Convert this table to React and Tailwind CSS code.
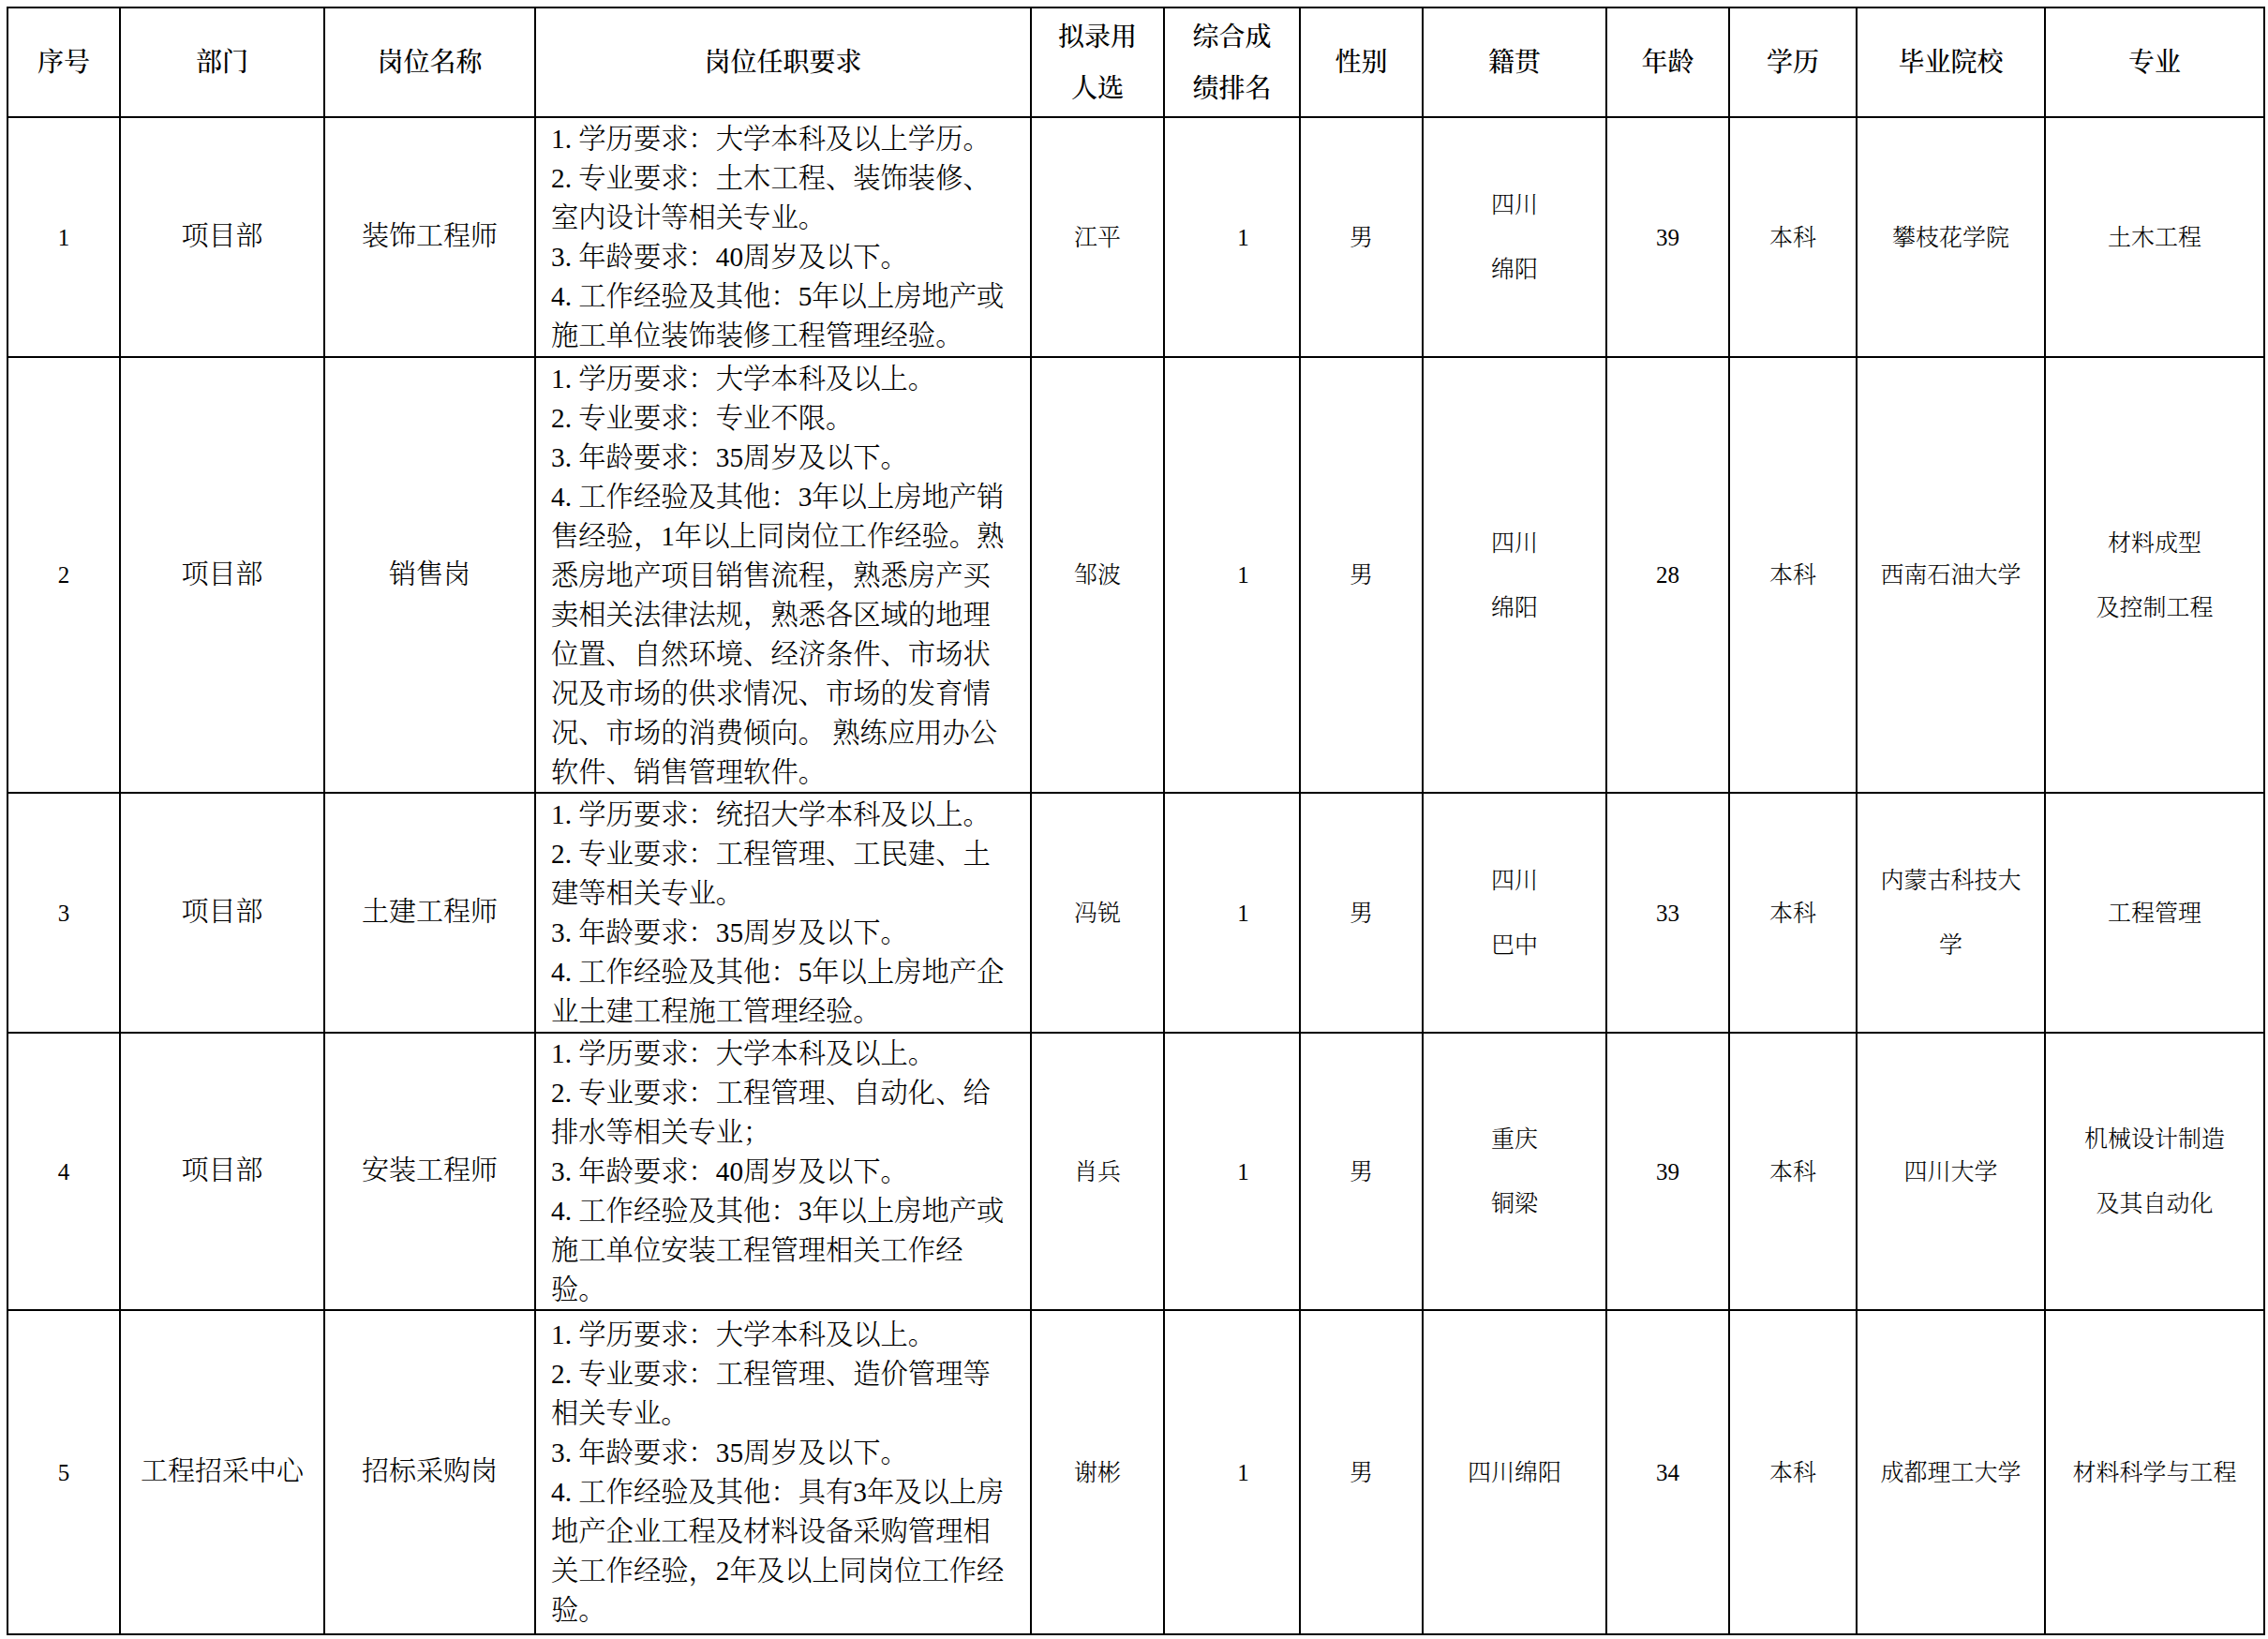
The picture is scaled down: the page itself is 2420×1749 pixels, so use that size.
import React from "react";

const FONT = {
  fontFamily:
    '"Liberation Serif", "Noto Serif CJK SC", "Noto Sans CJK SC", serif',
};

const rows = [
  {
    no: "1",
    dept: "项目部",
    pos: "装饰工程师",
    req: [
      "1.学历要求：大学本科及以上学历。",
      "2.专业要求：土木工程、装饰装修、",
      "室内设计等相关专业。",
      "3.年龄要求：40周岁及以下。",
      "4.工作经验及其他：5年以上房地产或",
      "施工单位装饰装修工程管理经验。",
    ],
    name: "江平",
    rank: "1",
    sex: "男",
    origin: ["四川", "绵阳"],
    age: "39",
    edu: "本科",
    school: ["攀枝花学院"],
    major: ["土木工程"],
  },
  {
    no: "2",
    dept: "项目部",
    pos: "销售岗",
    req: [
      "1.学历要求：大学本科及以上。",
      "2.专业要求：专业不限。",
      "3.年龄要求：35周岁及以下。",
      "4.工作经验及其他：3年以上房地产销",
      "售经验，1年以上同岗位工作经验。熟",
      "悉房地产项目销售流程，熟悉房产买",
      "卖相关法律法规，熟悉各区域的地理",
      "位置、自然环境、经济条件、市场状",
      "况及市场的供求情况、市场的发育情",
      "况、市场的消费倾向。 熟练应用办公",
      "软件、销售管理软件。",
    ],
    name: "邹波",
    rank: "1",
    sex: "男",
    origin: ["四川", "绵阳"],
    age: "28",
    edu: "本科",
    school: ["西南石油大学"],
    major: ["材料成型", "及控制工程"],
  },
  {
    no: "3",
    dept: "项目部",
    pos: "土建工程师",
    req: [
      "1.学历要求：统招大学本科及以上。",
      "2.专业要求：工程管理、工民建、土",
      "建等相关专业。",
      "3.年龄要求：35周岁及以下。",
      "4.工作经验及其他：5年以上房地产企",
      "业土建工程施工管理经验。",
    ],
    name: "冯锐",
    rank: "1",
    sex: "男",
    origin: ["四川", "巴中"],
    age: "33",
    edu: "本科",
    school: ["内蒙古科技大", "学"],
    major: ["工程管理"],
  },
  {
    no: "4",
    dept: "项目部",
    pos: "安装工程师",
    req: [
      "1.学历要求：大学本科及以上。",
      "2.专业要求：工程管理、自动化、给",
      "排水等相关专业；",
      "3.年龄要求：40周岁及以下。",
      "4.工作经验及其他：3年以上房地产或",
      "施工单位安装工程管理相关工作经",
      "验。",
    ],
    name: "肖兵",
    rank: "1",
    sex: "男",
    origin: ["重庆", "铜梁"],
    age: "39",
    edu: "本科",
    school: ["四川大学"],
    major: ["机械设计制造", "及其自动化"],
  },
  {
    no: "5",
    dept: "工程招采中心",
    pos: "招标采购岗",
    req: [
      "1.学历要求：大学本科及以上。",
      "2.专业要求：工程管理、造价管理等",
      "相关专业。",
      "3.年龄要求：35周岁及以下。",
      "4.工作经验及其他：具有3年及以上房",
      "地产企业工程及材料设备采购管理相",
      "关工作经验，2年及以上同岗位工作经",
      "验。",
    ],
    name: "谢彬",
    rank: "1",
    sex: "男",
    origin: ["四川绵阳"],
    age: "34",
    edu: "本科",
    school: ["成都理工大学"],
    major: ["材料科学与工程"],
  },
];

function Head({ children }) {
  return (
    <div className="bg-white flex flex-col items-center justify-center text-[28px] font-medium text-black leading-[55px] text-center">
      {children}
    </div>
  );
}

function Big({ children }) {
  return (
    <div className="bg-white flex items-center justify-center text-[29px] font-light text-black text-center whitespace-nowrap">
      {children}
    </div>
  );
}

function Small({ lines, shift }) {
  return (
    <div
      className={
        "bg-white flex flex-col items-center justify-center text-[25px] font-light text-black text-center leading-[69px] whitespace-nowrap" +
        (shift ? " pl-[24px]" : "")
      }
    >
      {lines.map((l, i) => (
        <div key={i}>{l}</div>
      ))}
    </div>
  );
}

function ReqLine({ text }) {
  const m = text.match(/^(\d\.)(.*)$/);
  if (m) {
    return (
      <div>
        <span className="inline-block w-[1em]">{m[1]}</span>
        {m[2]}
      </div>
    );
  }
  return <div>{text}</div>;
}

function Req({ lines }) {
  return (
    <div className="bg-white flex flex-col justify-center pl-[16px] text-[29.3px] font-light text-black leading-[42px] whitespace-nowrap">
      {lines.map((l, i) => (
        <ReqLine key={i} text={l} />
      ))}
    </div>
  );
}

export default function App() {
  return (
    <div className="w-[2420px] h-[1749px] bg-white pt-[7px] pl-[7px]" style={FONT}>
      <div className="w-[2410px] h-[1738px] bg-black p-[2px] grid gap-[2px] grid-cols-[118px_216px_223px_527px_140px_143px_129px_194px_129px_134px_199px_232px] grid-rows-[115px_254px_463px_254px_294px_344px]">
        <Head>序号</Head>
        <Head>部门</Head>
        <Head>岗位名称</Head>
        <Head>岗位任职要求</Head>
        <Head>
          <div>拟录用</div>
          <div>人选</div>
        </Head>
        <Head>
          <div>综合成</div>
          <div>绩排名</div>
        </Head>
        <Head>性别</Head>
        <Head>籍贯</Head>
        <Head>年龄</Head>
        <Head>学历</Head>
        <Head>毕业院校</Head>
        <Head>专业</Head>
        {rows.map((r) => (
          <React.Fragment key={r.no}>
            <Small lines={[r.no]} />
            <Big>{r.dept}</Big>
            <Big>{r.pos}</Big>
            <Req lines={r.req} />
            <Small lines={[r.name]} />
            <Small lines={[r.rank]} shift />
            <Small lines={[r.sex]} />
            <Small lines={r.origin} />
            <Small lines={[r.age]} />
            <Small lines={[r.edu]} />
            <Small lines={r.school} />
            <Small lines={r.major} />
          </React.Fragment>
        ))}
      </div>
    </div>
  );
}
